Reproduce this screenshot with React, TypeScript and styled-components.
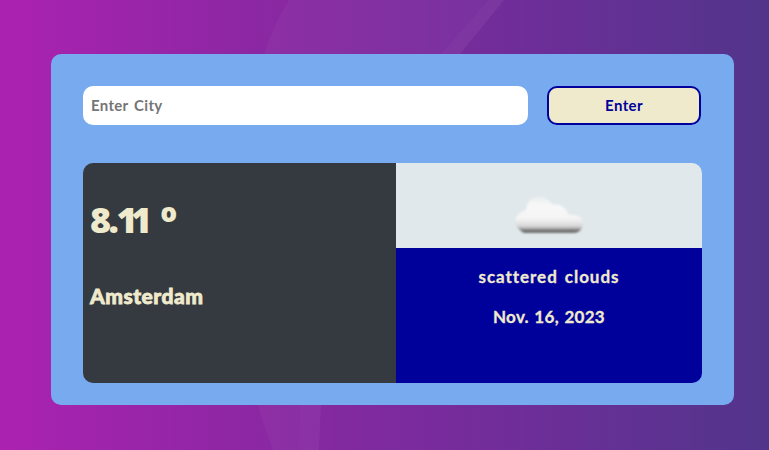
import React from "react";
import styled, { createGlobalStyle } from "styled-components";

const GlobalStyle = createGlobalStyle`
  * { box-sizing: border-box; }
  body { margin: 0; overflow: hidden; }
`;

const Page = styled.main`
  position: relative;
  width: 769px;
  height: 450px;
  padding: 54px 35px 45px 51px;
  font-family: Lato, "Open Sans", sans-serif;
  background: linear-gradient(90deg, #ab22b1 0%, #8d27a3 32%, #712d9a 65%, #51358b 100%);
`;

const Rays = styled.svg`
  position: absolute;
  inset: 0;
`;

const Card = styled.section`
  position: relative;
  height: 351px;
  padding: 32px;
  border-radius: 10px;
  background: #78aaef;
`;

const SearchForm = styled.form`
  display: flex;
  gap: 19px;
  height: 39px;
  margin-bottom: 38px;
`;

const CityInput = styled.input`
  width: 445px;
  padding: 0 8px 1px;
  border: 0;
  border-radius: 10px;
  background: #fff;
  color: #00009b;
  font: 700 15px Lato, sans-serif;
  letter-spacing: 0.3px;
  word-spacing: 2px;
  outline: none;
  &::placeholder { color: #757575; opacity: 1; }
`;

const SubmitButton = styled.button`
  width: 154px;
  padding: 0 0 1px;
  border: 2px solid #00009b;
  border-radius: 10px;
  background: #f0eacd;
  color: #00009b;
  font: 700 15px Lato, sans-serif;
  letter-spacing: 0.4px;
`;

const Weather = styled.div`
  display: grid;
  grid-template-columns: 313px 306px;
  height: 220px;
  border-radius: 10px;
  overflow: hidden;
  color: #f0eacd;
`;

const Summary = styled.div`
  padding: 34px 7px 0;
  background: #353a40;
`;

const Temperature = styled.h1`
  height: 46px;
  margin: 0;
  font-family: "Open Sans", sans-serif;
  font-size: 36px;
  font-weight: 800;
  line-height: 46px;
  letter-spacing: -2.5px;
`;

const Decimals = styled.span`
  letter-spacing: -6.5px;
`;

const Degree = styled.span`
  margin-left: 8px;
  font-size: 42px;
  line-height: 0;
  vertical-align: -4px;
`;

const City = styled.h2`
  margin: 40px 0 0;
  font-size: 21px;
  font-weight: 900;
  line-height: 26px;
  letter-spacing: 0.5px;
  -webkit-text-stroke: 0.8px #f0eacd;
`;

const Conditions = styled.div`
  display: grid;
  grid-template-rows: 85px 1fr;
`;

const IconArea = styled.div`
  display: flex;
  justify-content: center;
  padding-top: 30px;
  background: #e0e8eb;
`;

const Details = styled.div`
  padding-top: 17px;
  background: #00009b;
  text-align: center;
`;

const Detail = styled.p<{ $spacing: number; $wordGap: number }>`
  margin: 0 0 16px;
  font-size: 17px;
  font-weight: 700;
  line-height: 24px;
  letter-spacing: ${({ $spacing }) => $spacing}px;
  word-spacing: ${({ $wordGap }) => $wordGap}px;
  -webkit-text-stroke: 0.3px #f0eacd;
`;

const CloudIcon = () => (
  <svg width="76" height="45" viewBox="0 0 76 45" aria-hidden="true">
    <defs>
      <linearGradient id="cloudFill" x1="0" y1="0" x2="0" y2="1">
        <stop offset="0" stopColor="#ebeded" />
        <stop offset="0.25" stopColor="#f8f8f8" />
        <stop offset="0.6" stopColor="#f4f4f4" />
        <stop offset="0.8" stopColor="#dadada" />
        <stop offset="0.87" stopColor="#b5b5b5" />
        <stop offset="0.92" stopColor="#747474" />
        <stop offset="1" stopColor="#707070" />
      </linearGradient>
      <filter id="cloudSoft"><feGaussianBlur stdDeviation="0.85" /></filter>
    </defs>
    <path
      d="M13 40C8 37 4 33 4 28C4.500 23 9 19 15 17C16 9 20 4 27 3.500C33 3 38 7 42 12C49 10 55 15 58 22C65 21 72 24 72 30C72.500 35 68 40 63 40Z"
      fill="url(#cloudFill)"
      filter="url(#cloudSoft)"
    />
  </svg>
);

export default function App() {
  return (
    <>
      <GlobalStyle />
      <Page>
        <Rays width="769" height="450" aria-hidden="true">
          <g fill="#a65fc0">
            <path d="M289 0H504L460 54H264Q272 27 289 0Z" fillOpacity="0.12" />
            <path d="M504 0L460 54H441L489 0Z" fillOpacity="0.09" />
            <path d="M258 405H321L319 450H273Q263 426 258 405Z" fillOpacity="0.12" />
            <path d="M300 405H321L319 450H299Z" fillOpacity="0.08" />
          </g>
        </Rays>
        <Card>
          <SearchForm onSubmit={(event) => event.preventDefault()}>
            <CityInput placeholder="Enter City" aria-label="Enter City" />
            <SubmitButton>Enter</SubmitButton>
          </SearchForm>
          <Weather>
            <Summary>
              <Temperature>
                8.<Decimals>11</Decimals> <Degree>º</Degree>
              </Temperature>
              <City>Amsterdam</City>
            </Summary>
            <Conditions>
              <IconArea><CloudIcon /></IconArea>
              <Details>
                <Detail $spacing={0.95} $wordGap={2}>scattered clouds</Detail>
                <Detail $spacing={0.3} $wordGap={1}>Nov. 16, 2023</Detail>
              </Details>
            </Conditions>
          </Weather>
        </Card>
      </Page>
    </>
  );
}
